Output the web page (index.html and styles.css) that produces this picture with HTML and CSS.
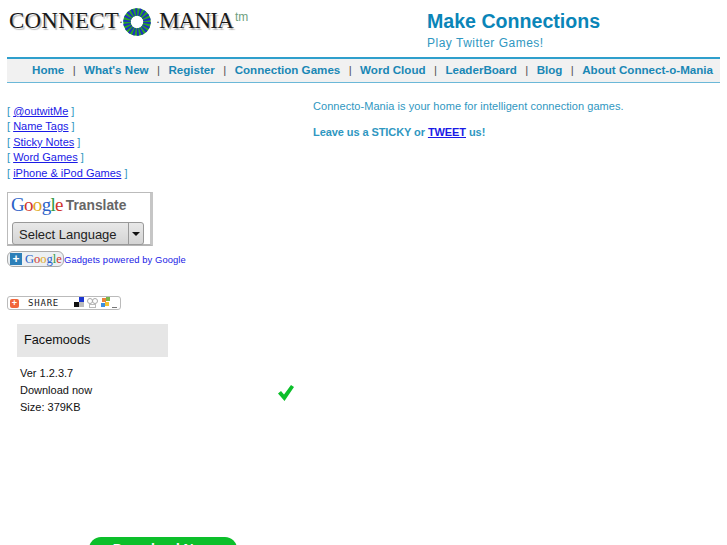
FILE: index.html
```html
<!DOCTYPE html>
<html lang="en">
<head>
<meta charset="utf-8">
<title>Connect-o-Mania</title>
<link rel="stylesheet" href="styles.css">
</head>
<body>
<div class="page">
  <header class="header">
    <div class="logo">
      <span class="logo-word connect">CONNECT</span><span class="logo-dot">·</span>
      <svg class="ring" width="28" height="28" viewBox="0 0 28 28">
        <circle cx="14" cy="14" r="10" fill="none" stroke="#2aa52a" stroke-width="7.5"/>
        <circle cx="14" cy="14" r="10" fill="none" stroke="#1e2fc0" stroke-width="7.5" stroke-dasharray="1.75 1.74"/>
      </svg>
      <span class="logo-dot after-ring">·</span><span class="logo-word mania">MANIA</span><span class="logo-tm">tm</span>
    </div>
    <div class="tagline">
      <h1 class="title">Make Connections</h1>
      <p class="subtitle">Play Twitter Games!</p>
    </div>
  </header>
  <nav class="nav">
    <a href="#">Home</a><span>|</span>
    <a href="#">What's New</a><span>|</span>
    <a href="#">Register</a><span>|</span>
    <a href="#">Connection Games</a><span>|</span>
    <a href="#">Word Cloud</a><span>|</span>
    <a href="#">LeaderBoard</a><span>|</span>
    <a href="#">Blog</a><span>|</span>
    <a href="#">About Connect-o-Mania</a>
  </nav>
  <main class="main">
    <aside class="side">
      <ul class="links">
        <li>[ <a href="#">@outwitMe</a> ]</li>
        <li>[ <a href="#">Name Tags</a> ]</li>
        <li>[ <a href="#">Sticky Notes</a> ]</li>
        <li>[ <a href="#">Word Games</a> ]</li>
        <li>[ <a href="#">iPhone &amp; iPod Games</a> ]</li>
      </ul>
      <div class="translate">
        <div class="translate-head">
          <span class="google"><b class="g-b">G</b><b class="g-r">o</b><b class="g-y">o</b><b class="g-b">g</b><b class="g-g">l</b><b class="g-r">e</b></span>
          <span class="translate-word">Translate</span>
        </div>
        <div class="select">
          <span class="select-label">Select Language</span>
          <span class="select-arrow"></span>
        </div>
      </div>
      <div class="gadgets">
        <span class="plus-google">
          <span class="plus">+</span>
          <span class="google small"><b class="g-b">G</b><b class="g-r">o</b><b class="g-y">o</b><b class="g-b">g</b><b class="g-g">l</b><b class="g-r">e</b></span>
        </span>
        <a class="gadgets-link" href="#">Gadgets powered by Google</a>
      </div>
      <div class="share">
        <span class="share-plus">+</span>
        <span class="share-word">SHARE</span>
        <svg class="share-icons" width="44" height="12" viewBox="0 0 44 12">
          <rect x="5" y="0" width="5" height="5" fill="#1c35d0"/>
          <rect x="0" y="5" width="5" height="5" fill="#111"/>
          <rect x="5" y="5" width="5" height="5" fill="#bbb"/>
          <circle cx="16" cy="4" r="2.5" fill="none" stroke="#aaa"/>
          <circle cx="21" cy="4" r="2.5" fill="none" stroke="#aaa"/>
          <rect x="15.5" y="7.5" width="6" height="3" fill="none" stroke="#bbb"/>
          <rect x="28" y="1" width="4" height="4" fill="#e8843a"/>
          <rect x="32" y="0" width="4" height="4" fill="#7ab648"/>
          <rect x="27" y="6" width="4" height="4" fill="#3b8fe0"/>
          <rect x="31" y="5" width="4" height="4" fill="#f2c230"/>
          <rect x="38" y="10" width="5" height="1" fill="#777"/>
        </svg>
      </div>
      <div class="app">
        <div class="app-name">Facemoods</div>
        <div class="app-row">
          <p class="app-info">Ver 1.2.3.7<br>Download now<br>Size: 379KB</p>
          <svg class="check" width="18" height="18" viewBox="0 0 18 18">
            <path d="M1 9.5 L4 7 L7 10.5 L14 1 L17 3 L7.5 17 Z" fill="#0cbf2a"/>
          </svg>
        </div>
        <div class="download">Download Now</div>
      </div>
    </aside>
    <section class="content">
      <p class="intro">Connecto-Mania is your home for intelligent connection games.</p>
      <p class="leave">Leave us a STICKY or <a href="#">TWEET</a> us!</p>
    </section>
  </main>
</div>
</body>
</html>
```
FILE: styles.css
```css
html, body {
  margin: 0;
  height: 545px;
  overflow: hidden;
  background: #fff;
}
body {
  font-family: "Liberation Sans", Arial, sans-serif;
  color: #2f97c1;
}
.page {
  width: 713px;
  margin-left: 7px;
}
.header {
  display: flex;
  height: 57px;
}
.logo {
  width: 418px;
  display: flex;
  align-items: flex-start;
  padding-top: 8px;
  box-sizing: border-box;
  height: 57px;
  margin-left: 2px;
}
.logo-word {
  font-family: "Liberation Serif", serif;
  font-size: 23px;
  line-height: 26px;
  color: #1a1a1a;
  text-shadow: 1.5px 1.5px 1px #bbb;
}
.connect {
  letter-spacing: 0.2px;
}
.mania {
  letter-spacing: -0.8px;
}
.logo-dot {
  font-family: "Liberation Serif", serif;
  font-size: 12px;
  line-height: 28px;
  color: #444;
  width: 3px;
}
.after-ring {
  margin-left: 5px;
}
.ring {
  margin-left: 1px;
  flex: none;
}
.logo-tm {
  font-size: 12px;
  line-height: 12px;
  color: #6f9f80;
  margin-left: 2px;
  margin-top: 3px;
}
.tagline {
  padding-top: 9px;
}
.title {
  margin: 0;
  font-size: 19.6px;
  line-height: 24px;
  font-weight: bold;
  color: #0a85b8;
}
.subtitle {
  margin: 2px 0 0;
  font-size: 12px;
  line-height: 16px;
  letter-spacing: 0.5px;
  color: #2f97c1;
}
.nav {
  display: flex;
  align-items: center;
  justify-content: flex-end;
  gap: 8.4px;
  height: 21px;
  padding: 0 7px 2px 0;
  border-top: 2px solid #2f9fcc;
  border-bottom: 1px solid #6bb8d8;
  background: #f1f1f1;
  font-size: 11.6px;
  font-weight: bold;
}
.nav a {
  color: #1a87b5;
  text-decoration: none;
}
.nav span {
  color: #555;
  font-weight: normal;
}
.main {
  display: flex;
  padding-top: 16px;
}
.side {
  width: 306px;
  flex: none;
  padding-top: 5px;
  font-size: 11px;
}
.links {
  list-style: none;
  margin: 0;
  padding: 0;
  line-height: 15.4px;
}
.links a, .leave a {
  color: #1a1ae6;
}
.translate {
  width: 146px;
  height: 54px;
  box-sizing: border-box;
  margin-top: 11px;
  border: 1px solid #bbb;
  border-right: 3px solid #c6c6c6;
  border-bottom: 2px solid #b5b5b5;
  padding: 0 6px 0 4px;
}
.translate-head {
  display: flex;
  align-items: center;
  gap: 3px;
  height: 24px;
}
.google {
  font-family: "Liberation Serif", serif;
  font-size: 19px;
  letter-spacing: -0.7px;
  margin-left: -1px;
}
.google b {
  font-weight: normal;
}
.g-b { color: #2a62c8; }
.g-r { color: #d0342c; }
.g-y { color: #e0a820; }
.g-g { color: #2f9a44; }
.translate-word {
  font-size: 13.8px;
  font-weight: bold;
  color: #666;
}
.select {
  display: flex;
  height: 21px;
  margin-top: 5px;
  border: 1px solid #999;
  border-radius: 3px;
  background: linear-gradient(#e8e8e8, #d4d4d4);
  color: #222;
  font-size: 13px;
}
.select-label {
  flex: 1;
  padding-left: 6px;
  line-height: 23px;
  border-right: 1px solid #999;
}
.select-arrow {
  width: 14px;
  position: relative;
}
.select-arrow::after {
  content: "";
  position: absolute;
  left: 3px;
  top: 9px;
  border: 4px solid transparent;
  border-top: 4px solid #111;
}
.gadgets {
  display: flex;
  align-items: center;
  margin-top: 5px;
  height: 16px;
}
.plus-google {
  display: flex;
  align-items: center;
  gap: 3px;
  width: 55px;
  height: 14px;
  border: 1px solid #aaa;
  border-radius: 6px;
  background: #ecf0f3;
  overflow: hidden;
  flex: none;
}
.plus {
  width: 12px;
  height: 12px;
  background: #2c7fb8;
  color: #fff;
  font-size: 12px;
  font-weight: bold;
  line-height: 12px;
  text-align: center;
  margin-left: 2px;
}
.google.small {
  font-size: 12.5px;
  letter-spacing: 0;
  margin-left: 0;
}
.gadgets-link {
  font-size: 9.4px;
  color: #1a1ae6;
  text-decoration: none;
  letter-spacing: 0.1px;
}
.share {
  display: flex;
  align-items: center;
  width: 112px;
  height: 12px;
  margin-top: 29px;
  border: 1px solid #bbb;
  border-radius: 3px;
  color: #222;
}
.share-plus {
  width: 9px;
  height: 9px;
  margin-left: 2px;
  background: #f2663a;
  border-radius: 2px;
  color: #fff;
  font-size: 9px;
  font-weight: bold;
  line-height: 9px;
  text-align: center;
}
.share-word {
  font-family: "DejaVu Sans Mono", monospace;
  font-size: 9px;
  letter-spacing: 0.8px;
  margin-left: 9px;
  width: 38px;
}
.share-icons {
  margin-left: 8px;
}
.app {
  margin-left: 10px;
  margin-top: 14px;
  color: #111;
  font-size: 11px;
}
.app-name {
  width: 151px;
  height: 33px;
  box-sizing: border-box;
  padding-left: 7px;
  background: #e6e6e6;
  font-size: 12.7px;
  line-height: 32px;
}
.app-row {
  display: flex;
  align-items: center;
  padding-left: 3px;
  margin-top: 8px;
}
.app-info {
  margin: 0;
  line-height: 17px;
  width: 257px;
}
.check {
  margin-top: 4px;
}
.download {
  width: 148px;
  height: 40px;
  margin-top: 121px;
  margin-left: 72px;
  border-radius: 12px;
  background: #0cbf2a;
  color: #fff;
  font-size: 14px;
  font-weight: bold;
  text-align: center;
  line-height: 24px;
}
.content {
  font-size: 11px;
}
.intro, .leave {
  margin: 0;
  line-height: 14px;
  letter-spacing: 0.05px;
}
.leave {
  margin-top: 12px;
  font-weight: bold;
  letter-spacing: -0.08px;
}
```
